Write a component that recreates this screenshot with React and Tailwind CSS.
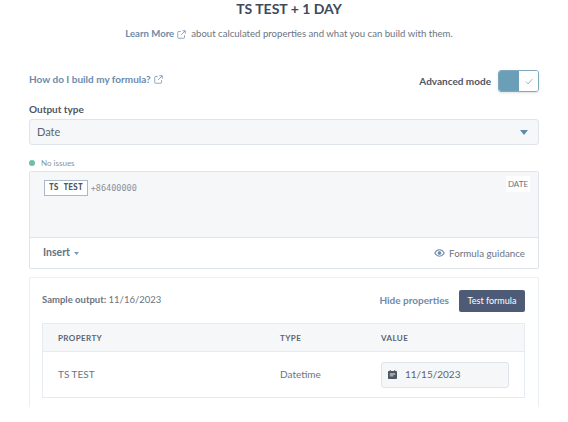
import React from 'react';

function ExternalIcon({ className }) {
  return (
    <svg viewBox="0 0 12 12" className={className} fill="none" stroke="currentColor" strokeWidth="1">
      <path d="M5 2H2a1 1 0 0 0-1 1v7a1 1 0 0 0 1 1h7a1 1 0 0 0 1-1V7" />
      <path d="M7 1h4v4M11 1L5.5 6.5" />
    </svg>
  );
}

function Caret({ className }) {
  return (
    <svg viewBox="0 0 10 6" className={className} fill="currentColor">
      <path d="M0 0h10L5 6z" />
    </svg>
  );
}

export default function App() {
  return (
    <div className="w-[568px] h-[407px] overflow-hidden bg-white font-['Lato',sans-serif] text-[#33475b]">
      <h1 className="text-center pl-[10px] text-[14px] leading-[18px] font-bold text-[#3c4a5c]">TS TEST + 1 DAY</h1>

      <div className="mt-[8px] flex items-center justify-center pl-[10px] text-[9.6px] leading-[16px] text-[#6b7480]">
        <span className="font-bold text-[#6d8bab]">Learn More</span>
        <ExternalIcon className="w-[9px] h-[9px] ml-[3px] mr-[5px] text-[#6d8bab]" />
        <span>about calculated properties and what you can build with them.</span>
      </div>

      <div className="mx-[29px] mt-[28px] flex justify-between">
        <div className="flex items-center h-[16px] mt-[1px] text-[10px] font-bold text-[#6d8bab]">
          How do I build my formula?
          <ExternalIcon className="w-[9px] h-[9px] ml-[3px]" />
        </div>
        <div className="flex items-center">
          <span className="mr-[7px] mt-[1px] text-[10px] font-bold text-[#4f5661]">Advanced mode</span>
          <div className="flex w-[41px] h-[22px] rounded-[3px] border border-[#7fa9bf] overflow-hidden shadow-sm">
            <div className="w-[20px] bg-[#6b9fb8]" />
            <div className="flex-1 flex items-center justify-center bg-white">
              <svg viewBox="0 0 10 8" className="w-[8px] h-[7px] text-[#7fa5ba]" fill="none" stroke="currentColor" strokeWidth="1">
                <path d="M1 4l3 3 5-6" />
              </svg>
            </div>
          </div>
        </div>
      </div>

      <div className="mx-[29px] mt-[9px] text-[10px] leading-[16px] font-bold text-[#4f5661]">Output type</div>

      <div className="mx-[29px] mt-[2px] h-[26px] flex items-center justify-between px-[7px] rounded-[3px] border border-[#dfe3eb] bg-[#f6f7f9] text-[11px] text-[#5b6470]">
        <span>Date</span>
        <Caret className="w-[8px] h-[5px] mr-[3px] text-[#5f8cab]" />
      </div>

      <div className="mx-[29px] mt-[11px] flex items-center h-[14px] text-[8px] text-[#8b929b]">
        <span className="w-[6px] h-[6px] rounded-full bg-[#6fbfa3] mr-[6px]" />
        No issues
      </div>

      <div className="mx-[29px] mt-[1px] h-[98px] flex flex-col rounded-[2px] border border-[#dfe3eb]">
        <div className="h-[66px] flex items-start justify-between bg-[#f6f7f9] border-b border-[#dfe3eb] pl-[14px] pr-[8px]">
          <div className="flex items-center mt-[8px]">
            <span className="h-[16px] px-[4px] flex items-center border border-[#a9b9cb] bg-white font-['DejaVu_Sans_Mono',monospace] text-[8px] font-bold text-[#4f5661]">TS&nbsp;TEST</span>
            <span className="ml-[3px] font-['DejaVu_Sans_Mono',monospace] text-[8.5px] text-[#8b929b]">+86400000</span>
          </div>
          <span className="mt-[4px] px-[2px] py-[2px] bg-white text-[8px] leading-[12px] text-[#6b7480]">DATE</span>
        </div>
        <div className="flex-1 flex items-center justify-between pl-[13px] pr-[13px]">
          <div className="flex items-center text-[10.5px] font-bold text-[#5f7388]">
            Insert
            <Caret className="w-[5px] h-[3px] ml-[4px] text-[#7c98b6]" />
          </div>
          <div className="flex items-center text-[9.8px] text-[#6b7480]">
            <svg viewBox="0 0 14 10" className="w-[11px] h-[8px] mr-[4px] text-[#6d8bab]" fill="none" stroke="currentColor" strokeWidth="1.3">
              <path d="M1 5c1.500-2.600 3.500-4 6-4s4.500 1.400 6 4c-1.500 2.600-3.500 4-6 4S2.500 7.600 1 5z" />
              <circle cx="7" cy="5" r="1.700" fill="currentColor" />
            </svg>
            Formula guidance
          </div>
        </div>
      </div>

      <div className="mx-[29px] mt-[8px] h-[140px] rounded-[2px] border border-[#eaf0f6] pl-[12px] pr-[13px] pt-[12px]">
        <div className="flex items-center justify-between h-[21px]">
          <div className="text-[9.5px] text-[#6b7480]">
            <span className="font-bold">Sample output:</span> 11/16/2023
          </div>
          <div className="flex items-center">
            <span className="mr-[10px] text-[10px] font-bold text-[#6d8bab]">Hide properties</span>
            <button className="w-[66px] h-[22px] rounded-[2px] bg-[#4d5b76] text-[9px] text-white">Test formula</button>
          </div>
        </div>
        <div className="mt-[12px] h-[75px] flex flex-col border border-[#e6ebf1]">
          <div className="h-[28px] grid grid-cols-[222px_101px_1fr] items-center pl-[15px] bg-[#f6f7f9] border-b border-[#e6ebf1] text-[8px] font-bold tracking-[0.4px] text-[#5b6470]">
            <span>PROPERTY</span>
            <span>TYPE</span>
            <span>VALUE</span>
          </div>
          <div className="flex-1 grid grid-cols-[222px_101px_1fr] items-center pl-[15px] text-[10px] text-[#6b7480]">
            <span>TS TEST</span>
            <span>Datetime</span>
            <div className="w-[128px] h-[26px] flex items-center pl-[6px] rounded-[3px] border border-[#dfe3eb] bg-[#f6f7f9] text-[10px] text-[#5b6470]">
              <svg viewBox="0 0 10 10" className="w-[9px] h-[9px] mr-[8px] text-[#4f5661]" fill="currentColor">
                <path d="M2 0h1v1h4V0h1v1h1a1 1 0 0 1 1 1v7a1 1 0 0 1-1 1H1a1 1 0 0 1-1-1V2a1 1 0 0 1 1-1h1zM2 4v1h6V4zm0 2v1h4V6z" fillRule="evenodd" />
              </svg>
              11/15/2023
            </div>
          </div>
        </div>
      </div>
    </div>
  );
}
